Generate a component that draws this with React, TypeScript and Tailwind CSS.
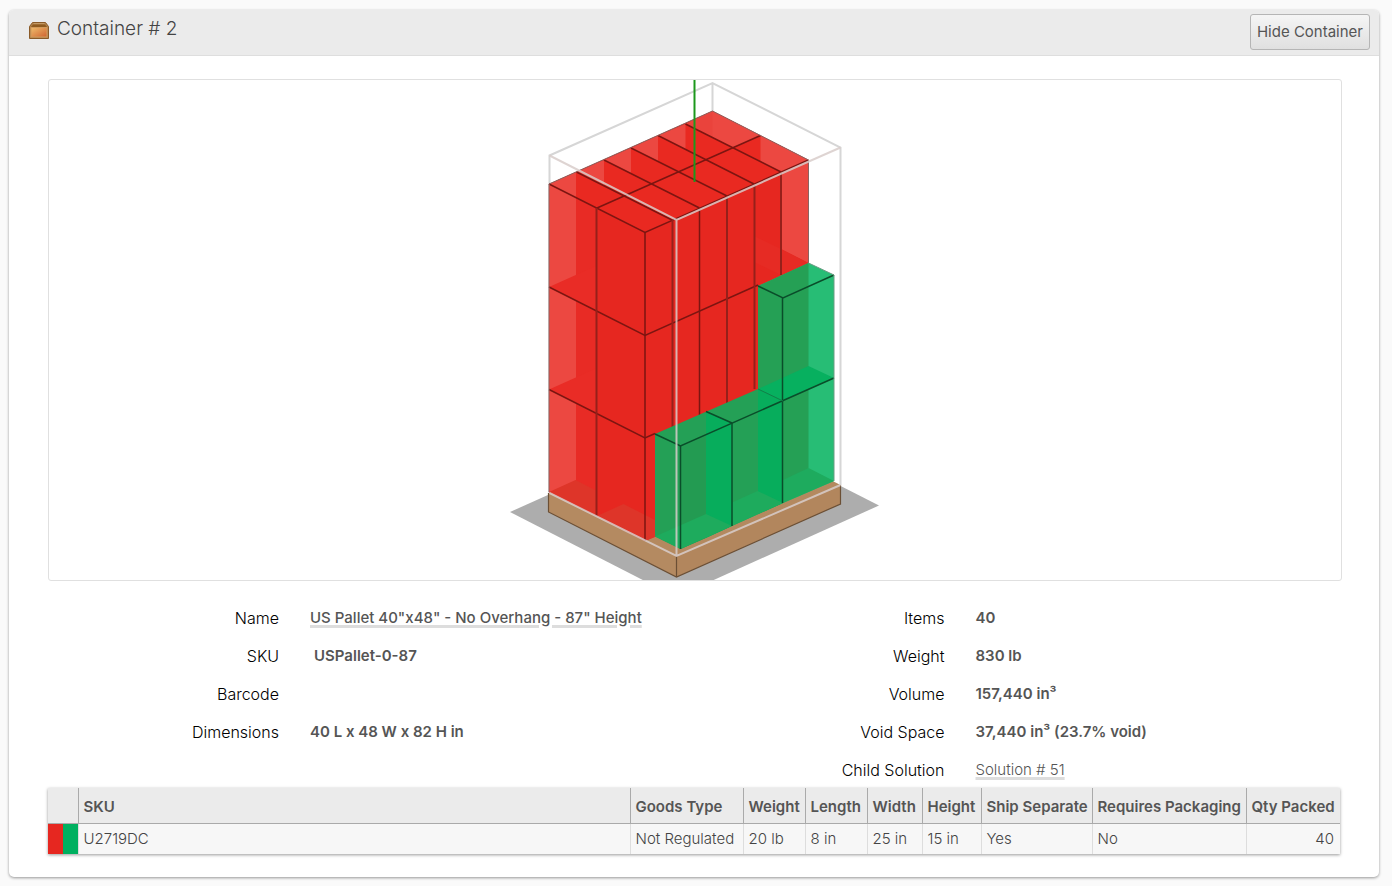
import type { ReactNode } from "react";

interface Column {
  label: string;
  value: string;
  width: string;
}

const columns: Column[] = [
  { label: "SKU", value: "U2719DC", width: "" },
  { label: "Goods Type", value: "Not Regulated", width: "w-[113px]" },
  { label: "Weight", value: "20 lb", width: "w-[62px]" },
  { label: "Length", value: "8 in", width: "w-[62px]" },
  { label: "Width", value: "25 in", width: "w-[55px]" },
  { label: "Height", value: "15 in", width: "w-[59px]" },
  { label: "Ship Separate", value: "Yes", width: "w-[111px]" },
  { label: "Requires Packaging", value: "No", width: "w-[154px]" },
  { label: "Qty Packed", value: "40", width: "w-[94px]" },
];

function BoxIcon() {
  return (
    <svg className="mt-[2px]" width="20" height="17" viewBox="0 0 20 17" aria-hidden="true">
      <defs>
        <linearGradient id="boxFront" x1="0" y1="0" x2="1" y2="1">
          <stop offset="0" stopColor="#efbd6c" />
          <stop offset="1" stopColor="#cf6230" />
        </linearGradient>
      </defs>
      <path d="M3.500 0.500h13l3 4v12h-19v-12z" fill="#b08048" stroke="#8a5a28" />
      <path d="M4 2.500h12l2 2.500H2z" fill="#8f5b1f" />
      <path d="M4.500 1.500h11" stroke="#c29a66" />
      <rect x="2" y="5.500" width="16" height="9.500" fill="url(#boxFront)" stroke="#d09a5c" />
    </svg>
  );
}

function LoadDiagram() {
  return (
    <svg
      viewBox="495 80 400 500"
      className="block h-[500px] w-[400px] max-w-full"
      role="img"
      aria-label="Packed pallet"
    >
      {/* shadow and pallet */}
      <path d="M510 512 713 421 879 505.500 676 597z" fill="#adadad" />
      <path d="M548.500 493 712 420 840.500 485 676.500 556z" fill="#b4895f" />
      <path d="M548.500 493 676.500 556V577L548.500 512z" fill="#b48a61" />
      <path d="M840.500 485 676.500 556V577L840.500 504z" fill="#b2865d" />
      <path
        d="M548.500 493V512L676.500 577 840.500 504V485M676.500 556V577"
        fill="none"
        stroke="#6b4f35"
        strokeWidth="1.200"
      />

      {/* white behind the load, above the pallet */}
      <path d="M549.500 488V155.500L712.500 83 840.500 147.500V480L712.500 424z" fill="#fff" />

      {/* back edges of the container */}
      <path
        d="M549.500 493V155.500L712.500 83 840.500 147.500V485M712.500 83V112"
        fill="none"
        stroke="#d6d6d6"
        strokeWidth="2"
      />

      {/* red stack */}
      <path d="M549 184 712.500 111 808.500 160V470L645 541 549 492z" fill="#e62720" />
      <path d="M549 184 712.500 111 808.500 160 645 232.500z" fill="#e92921" />
      <path d="M575.500 197 597 208V516L575.500 505z" fill="#e82b25" />
      <g fill="#ec4841">
        <path d="M549 184 576 172V505.500L549 492z" />
        <path d="M576.500 172 604 160V185.500z" />
        <path d="M604 160 631 148V173z" />
        <path d="M631 148 658 135.500V161z" />
        <path d="M658 135.500 685.500 124V149z" />
        <path d="M685.500 124 712.500 111 760.500 135.500 733.500 147.500z" />
        <path d="M760.500 135.500 808.500 160V263L781 249V172L760.500 161.500z" />
      </g>
      <path d="M685.500 124 712.500 111V137z" fill="#ea433c" />
      <path d="M781 249V199L781 249 808.500 263 781 275 754 262V236z" fill="#e62b24" />
      <g fill="#e92c26">
        <path d="M549 287 597 265.500V311z" />
        <path d="M549 389.500 597 368V413.500z" />
      </g>
      <path
        d="M549 492 575.500 480 597 491V516zM597 516 623.500 504 655 520V537L645 541z"
        fill="#de3529"
      />
      <g fill="none" stroke="#7c1511" strokeWidth="1.500">
        <path d="M549 184 645 232.500 808.500 160M597 208 760.500 135.500" />
        <path d="M576.500 172 672 220M604 160 699.500 208M631 148 727 196M658 135.500 754 184M685.500 124 781 172" />
        <path d="M549 287 645 335.500 758 285M549 389.500 645 438 655 433.500" />
        <path d="M645 232.500V541M699.500 208V415" />
        <path
          d="M596.500 208V516M672.500 220V427M727 196V403M754.500 184V389M781 172V275"
          stroke="#96201a"
          strokeWidth="2"
        />
      </g>
      <path
        d="M549 492V184L712.500 111 808.500 160V263"
        fill="none"
        stroke="#8c6360"
        strokeWidth="1"
      />

      {/* green tower */}
      <path d="M758 286 808.500 263 834 275V481L783 503 758 491z" fill="#27bd75" />
      <path d="M758 286 808.500 263V468L783 503 758 491z" fill="#25a055" />
      <path d="M758 389 808.500 366 834 378 783 401z" fill="#07b05f" />
      <path d="M783 480 808.500 468 834 481 783 503z" fill="#1eab5e" />

      {/* green front row */}
      <path d="M655 434 758 389 783 401V503L680.500 549 655 536.500z" fill="#24a056" />
      <path d="M680.500 446 706 434.500V538L680.500 549z" fill="#239b52" />
      <path d="M706 411.500 732 423V526L706 538zM758 389 783 401V503L758 514z" fill="#07ad5c" />
      <path d="M655 536.500 706 514 732 526 680.500 549z" fill="#1eab5d" />
      <path d="M732 502.500 757.500 491 783 503 732 526z" fill="#1eab5d" />
      <g fill="none" stroke="#0a4d2a" strokeWidth="1.500">
        <path d="M758 286 783 298 834 275M782.500 298V503" />
        <path d="M655 434 680.500 446 834 378M706 411.500 732 423" />
        <path d="M680.500 446V549M732 423V526" />
      </g>
      <path d="M758 389 783 401" stroke="#11804a" />
      <path d="M834 275V481M808.500 263 834 275" stroke="#6b9c83" />

      {/* front edges of the container */}
      <path
        d="M549.500 155.500 676.500 220 840.500 147.500M676.500 220V556M549.500 493 676.500 556 840.500 485"
        fill="none"
        stroke="#d8cdca"
        strokeWidth="2"
        strokeOpacity="0.85"
      />
      <path d="M694.500 80V182" stroke="#1c981c" strokeWidth="2" />
    </svg>
  );
}

function Detail({ label, children }: { label: string; children?: ReactNode }) {
  return (
    <div className="grid h-[38px] grid-cols-[231px_1fr] items-center gap-x-[31px]">
      <dt className="text-right text-base font-light text-black">{label}</dt>
      <dd className="text-[15px] font-semibold text-[#555]">{children}</dd>
    </div>
  );
}

export default function App() {
  return (
    <div className="min-h-screen bg-[#fafafa] pt-[10px] pr-[13px] pb-2 pl-[9px] font-['Inter',sans-serif] text-[#444]">
      <section className="rounded-[5px] bg-white shadow-[0_1px_3px_rgba(0,0,0,0.4)]">
        <header className="flex h-[46px] items-start justify-between rounded-t-[5px] border-b border-[#dedede] bg-[#ebebeb] pt-1 pr-[9px] pl-5">
          <div className="flex items-center gap-2 pt-[3px]">
            <BoxIcon />
            <h2 className="text-[19px] leading-6 font-light text-[#444]">Container # 2</h2>
          </div>
          <button
            type="button"
            className="h-9 rounded-[3px] border border-[#b5b5b5] bg-linear-to-b from-[#f5f5f5] to-[#e0e0e0] px-[6px] text-[15px] text-[#555]"
          >
            Hide Container
          </button>
        </header>

        <div className="pt-[23px] pr-[37px] pb-[23px] pl-[39px]">
          <div className="flex justify-center rounded-[3px] border border-[#e0e0e0]">
            <LoadDiagram />
          </div>

          <div className="-mb-px grid grid-cols-2 gap-x-[37px] pt-[18px]">
            <dl>
              <Detail label="Name">
                <a
                  href="#"
                  className="font-medium underline decoration-[#ddd] decoration-3 underline-offset-2"
                >
                  US Pallet 40"x48" - No Overhang - 87" Height
                </a>
              </Detail>
              <Detail label="SKU">
                <span className="pl-1">USPallet-0-87</span>
              </Detail>
              <Detail label="Barcode" />
              <Detail label="Dimensions">40 L x 48 W x 82 H in</Detail>
            </dl>
            <dl>
              <Detail label="Items">40</Detail>
              <Detail label="Weight">830 lb</Detail>
              <Detail label="Volume">157,440 in³</Detail>
              <Detail label="Void Space">37,440 in³ (23.7% void)</Detail>
              <Detail label="Child Solution">
                <a
                  href="#"
                  className="font-light underline decoration-[#ddd] decoration-3 underline-offset-2"
                >
                  Solution # 51
                </a>
              </Detail>
            </dl>
          </div>

          <div className="pr-[2px]">
            <table className="w-full table-fixed border-collapse text-left text-[15px] whitespace-nowrap shadow-[0_1px_3px_rgba(0,0,0,0.4)]">
              <colgroup>
                <col className="w-[30px]" />
                {columns.map((col) => (
                  <col key={col.label} className={col.width} />
                ))}
              </colgroup>
              <thead>
                <tr className="h-[35px] border-b border-[#aaa] bg-[#ebebeb] text-[#555]">
                  <th aria-label="Colour" />
                  {columns.map((col) => (
                    <th
                      key={col.label}
                      className="border-l border-[#aaa] px-[5px] pt-[3px] font-semibold last:pr-[6px] last:text-right"
                    >
                      {col.label}
                    </th>
                  ))}
                </tr>
              </thead>
              <tbody>
                <tr className="h-[30px] bg-[#f7f7f7] font-light">
                  <td className="p-0">
                    <div className="flex h-[30px]">
                      <span className="flex-1 bg-[#e62720]" />
                      <span className="flex-1 bg-[#00b060]" />
                    </div>
                  </td>
                  {columns.map((col) => (
                    <td
                      key={col.label}
                      className="border-l border-[#ddd] px-[5px] pt-px last:pr-[6px] last:text-right"
                    >
                      {col.value}
                    </td>
                  ))}
                </tr>
              </tbody>
            </table>
          </div>
        </div>
      </section>
    </div>
  );
}
